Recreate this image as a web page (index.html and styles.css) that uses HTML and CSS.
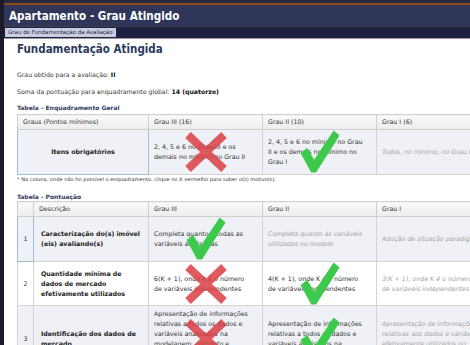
FILE: index.html
```html
<!DOCTYPE html>
<html lang="pt">
<head>
<meta charset="utf-8">
<title>Apartamento - Grau Atingido</title>
<link rel="stylesheet" href="styles.css">
</head>
<body>
<div class="frame">
  <header class="top">
    <div class="titlebar"><h1 class="title">Apartamento - Grau Atingido</h1></div>
    <div class="tabbar"><span class="tab">Grau de Fundamentação da Avaliação</span></div>
  </header>
  <main class="content">
    <h2 class="heading">Fundamentação Atingida</h2>
    <p class="line">Grau obtido para a avaliação: <b>II</b></p>
    <p class="line">Soma da pontuação para enquadramento global: <b>14 (quatorze)</b></p>

    <h3 class="caption">Tabela - Enquadramento Geral</h3>
    <table class="grid t1">
      <colgroup><col class="c-a"><col class="c-g"><col class="c-g"><col class="c-g"></colgroup>
      <thead>
        <tr><th>Graus (Pontos mínimos)</th><th>Grau III (16)</th><th>Grau II (10)</th><th>Grau I (6)</th></tr>
      </thead>
      <tbody>
        <tr class="alt tall">
          <td class="sel center strong">Itens obrigatórios</td>
          <td class="mk">2, 4, 5 e 6 no Grau III e os demais no mínimo no Grau II<span class="mark"><svg class="x" viewBox="0 0 46 42"><path d="M5 4 L41 38 M41 4 L5 38"/></svg></span></td>
          <td class="mk">2, 4, 5 e 6 no mínimo no Grau II e os demais no mínimo no Grau I<span class="mark"><svg class="ok" viewBox="0 0 40 44"><polygon points="0,23 7,18 14,30 34,0 40,5 16,43 11,43"/></svg></span></td>
          <td class="muted">Todos, no mínimo, no Grau I</td>
        </tr>
      </tbody>
    </table>
    <p class="note">* Na coluna, onde não foi possível o enquadramento, clique no X vermelho para saber o(s) motivo(s).</p>

    <h3 class="caption cap2">Tabela - Pontuação</h3>
    <table class="grid t2">
      <colgroup><col class="c-n"><col class="c-d"><col class="c-g"><col class="c-g"><col class="c-g"></colgroup>
      <thead>
        <tr><th></th><th>Descrição</th><th>Grau III</th><th>Grau II</th><th>Grau I</th></tr>
      </thead>
      <tbody>
        <tr class="alt r1">
          <td class="num sel">1</td>
          <td class="strong desc">Caracterização do(s) imóvel<br>(eis) avaliando(s)</td>
          <td class="mk">Completa quanto a todas as variáveis analisadas<span class="mark"><svg class="ok" viewBox="0 0 40 44"><polygon points="0,23 7,18 14,30 34,0 40,5 16,43 11,43"/></svg></span></td>
          <td class="muted">Completa quanto às variáveis utilizadas no modelo</td>
          <td class="muted">Adoção de situação paradigma</td>
        </tr>
        <tr class="r2">
          <td class="num">2</td>
          <td class="strong desc">Quantidade mínima de<br>dados de mercado<br>efetivamente utilizados</td>
          <td class="mk">6(K + 1), onde K é o número de variáveis independentes<span class="mark"><svg class="x" viewBox="0 0 46 42"><path d="M5 4 L41 38 M41 4 L5 38"/></svg></span></td>
          <td class="mk">4(K + 1), onde K é o número de variáveis independentes<span class="mark"><svg class="ok" viewBox="0 0 40 44"><polygon points="0,23 7,18 14,30 34,0 40,5 16,43 11,43"/></svg></span></td>
          <td class="muted">3(K + 1), onde K é o número de variáveis independentes</td>
        </tr>
        <tr class="alt r3">
          <td class="num">3</td>
          <td class="strong desc">Identificação dos dados de<br>mercado</td>
          <td class="mk">Apresentação de informações relativas a todos os dados e variáveis analisados na modelagem, com foto e características observadas pelo autor do laudo<span class="mark"><svg class="x" viewBox="0 0 46 42"><path d="M5 4 L41 38 M41 4 L5 38"/></svg></span></td>
          <td class="mk">Apresentação de informações relativas a todos os dados e variáveis analisados na modelagem<span class="mark"><svg class="ok" viewBox="0 0 40 44"><polygon points="0,23 7,18 14,30 34,0 40,5 16,43 11,43"/></svg></span></td>
          <td class="muted">Apresentação de informações relativas aos dados e variáveis efetivamente utilizados no modelo</td>
        </tr>
      </tbody>
    </table>
  </main>
</div>
</body>
</html>
```

FILE: styles.css
```css
* { box-sizing: border-box; }
html, body { margin: 0; padding: 0; }
body {
  background: #1b1b2a;
  overflow: hidden;
  width: 470px;
  height: 345px;
  font-family: "DejaVu Sans", Verdana, sans-serif;
  color: #333;
}
.frame {
  margin-left: 4px;
  height: 345px;
  background: #fff;
  overflow: hidden;
}
.top {
  background: #262842;
  padding-top: 3px;
}
.titlebar {
  border-top: 2px solid #8d4d1d;
  background: #2f365a;
  height: 24px;
  border-bottom: 1px solid #3d3d4c;
  padding-left: 5px;
  display: flex;
  align-items: center;
}
.title {
  margin: 0;
  color: #fff;
  font-family: "DejaVu Sans Condensed", "DejaVu Sans", sans-serif;
  font-stretch: condensed;
  font-size: 11.6px;
  font-weight: bold;
  line-height: 12px;
}
.tabbar {
  background: #1f2143;
  height: 12px;
  border-bottom: 1px solid #9a9aa8;
  padding-left: 1px;
  display: flex;
  align-items: center;
}
.tab {
  display: block;
  background: #c8cde0;
  color: #1f2450;
  font-size: 5.5px;
  height: 9px;
  line-height: 9px;
  padding: 0 3px;
}
.content {
  padding: 4px 0 0 13px;
}
.heading {
  margin: 0 0 15px;
  color: #2e3a5c;
  font-family: "DejaVu Sans Condensed", "DejaVu Sans", sans-serif;
  font-stretch: condensed;
  font-size: 11.5px;
  line-height: 13px;
  font-weight: bold;
}
.line {
  margin: 0 0 10px;
  font-size: 6.2px;
  line-height: 7px;
  color: #333;
}
.line + .line { margin-bottom: 9px; }
.line b { color: #111; }
.caption {
  margin: 0 0 3px;
  font-size: 6px;
  line-height: 7px;
  font-weight: bold;
  color: #2e3a5c;
}
.cap2 { margin-bottom: 1px; }
.grid {
  border-collapse: collapse;
  table-layout: fixed;
  font-size: 6.3px;
  line-height: 10px;
}
.t1 { width: 471px; }
.t2 { width: 471px; }
.c-a { width: 131px; }
.c-g { width: 114px; }
.c-n { width: 16px; }
.c-d { width: 115px; }
.grid th {
  height: 15px;
  text-align: left;
  font-weight: normal;
  color: #333;
  padding: 0 5px;
  background: linear-gradient(#f9f9f9, #ededed);
  border: 1px solid #cfcfcf;
}
.grid td {
  border: 1px solid #d4d4d4;
  padding: 0 8px 0 5px;
  vertical-align: middle;
  position: relative;
}
.grid tr.alt td { background: #eff1f6; }
.tall td { height: 45px; }
.r1 td { height: 45px; }
.r2 td { height: 44px; }
.r3 td { height: 66px; }
.grid td.sel {
  border: 1px solid #9dbfd4;
  background: #f7f9fb;
}
.center { text-align: center; }
.grid td.center { padding: 0 5px; }
.strong { font-weight: bold; color: #222; }
.grid td.desc { padding: 0 0 0 7px; white-space: nowrap; }
.grid td.num { text-align: center; padding: 0; }
.muted { font-style: italic; color: #a3a3a3; }
.note {
  margin: 1px 0 11px 0;
  font-size: 5.1px;
  line-height: 6px;
  color: #333;
}
.mark {
  position: absolute;
  left: 50%;
  top: 50%;
  transform: translate(-50%, -50%);
  display: block;
  line-height: 0;
}
.mark svg { display: block; }
.ok { width: 39px; height: 43px; fill: #3cc94c; }
.x { width: 46px; height: 42px; }
.x path { stroke: #d93e44; stroke-width: 8; fill: none; opacity: 0.85; }
```
